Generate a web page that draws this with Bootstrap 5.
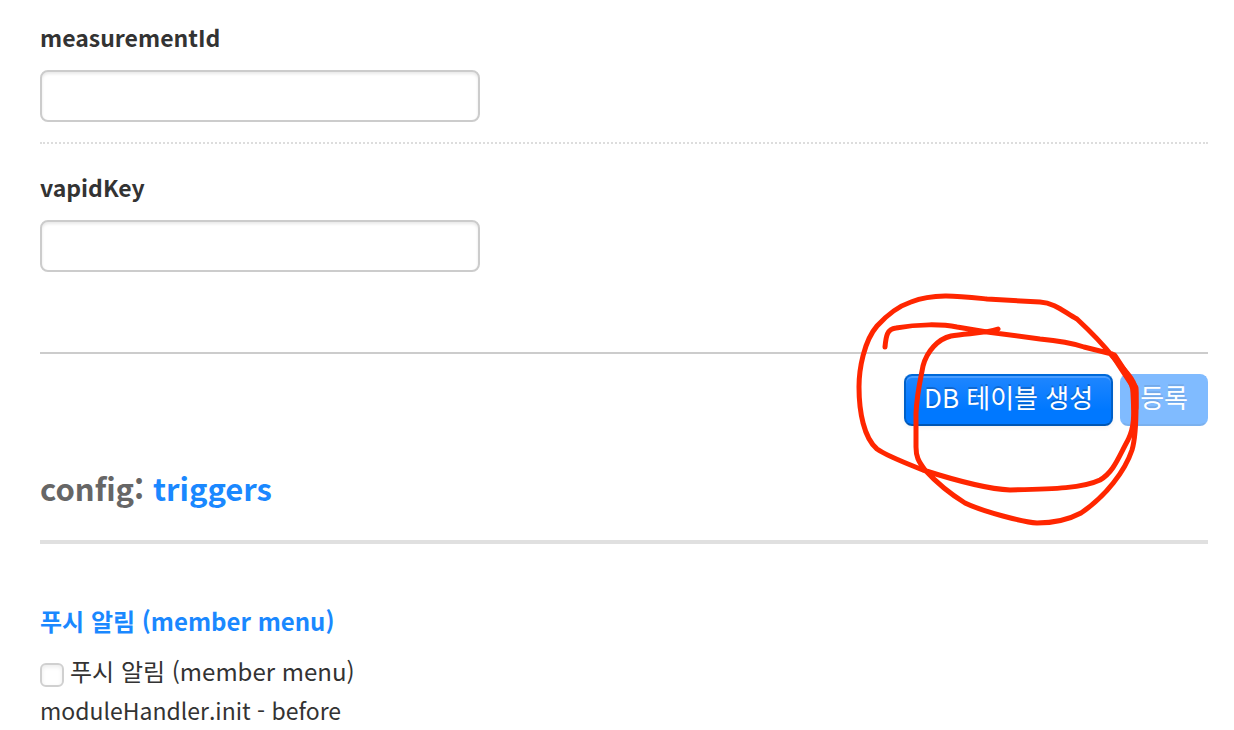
<!DOCTYPE html>
<html lang="ko">
<head>
<meta charset="utf-8">
<meta name="viewport" content="width=device-width, initial-scale=1">
<title>config: triggers</title>
<link href="https://cdn.jsdelivr.net/npm/bootstrap@5.3.0/dist/css/bootstrap.min.css" rel="stylesheet">
<style>
body { font-family: "Noto Sans CJK KR", sans-serif; font-size: 24px; line-height: 38px; color: #333; background: #fff; }
.page { padding: 18px 26px 0 40px; }
.field { padding-bottom: 20px; }
.field + .field { border-top: 2px dotted #ddd; padding-top: 24px; padding-bottom: 80px; }
.field label { font-size: 23px; font-weight: 700; margin-bottom: 14px; }
.field .form-control { max-width: 440px; height: 52px; border: 2px solid #ccc; border-radius: 8px; box-shadow: inset 0 2px 3px rgba(0,0,0,.09); }
.actions { border-top: 2px solid #ccc; padding-top: 20px; gap: 7px; }
.actions .btn { height: 52px; padding: 0 18px; border: 2px solid; border-color: #0069d9 #0060c8 #0056b3; border-radius: 8px; color: #fff; font-size: 26px; line-height: 42px; display: flex; background: linear-gradient(#1f86ff, #0078ff 70%); text-shadow: 0 -2px 0 rgba(0,0,0,.2); box-shadow: inset 0 2px 0 rgba(255,255,255,.2), 0 2px 4px rgba(0,0,0,.05); }
.actions .btn:disabled { opacity: 1; border-color: #80bbff #80bbff #7bb1ee; background: #80bbff; box-shadow: none; text-shadow: 0 -2px 0 rgba(0,0,0,.1); }
.scribble { right: 58px; top: -64px; pointer-events: none; }
.section-title { font-size: 31px; line-height: 44px; font-weight: 700; color: #666; margin: 40px 0 0; padding-bottom: 30px; border-bottom: 4px solid #e0e0e0; }
a, a:hover { color: #1a88ff; text-decoration: none; }
.sub-title { font-size: 24px; line-height: 38px; font-weight: 700; color: #1a88ff; margin: 58px 0 12px; }
.trigger .form-check-input { width: 24px; height: 24px; margin: 8px 0 0; border: 2px solid #d0d0d0; border-radius: 6px; box-shadow: inset 0 2px 4px rgba(0,0,0,.08); }
.trigger { gap: 6px; }
.hook { font-size: 23px; line-height: 40px; }
</style>
</head>
<body>
<main class="page">
  <form>
    <div class="field">
      <label class="d-block" for="measurementId">measurementId</label>
      <input class="form-control" type="text" id="measurementId">
    </div>
    <div class="field">
      <label class="d-block" for="vapidKey">vapidKey</label>
      <input class="form-control" type="text" id="vapidKey">
    </div>
    <div class="actions d-flex justify-content-end position-relative">
      <button type="button" class="btn">DB 테이블 생성</button>
      <button type="submit" class="btn" disabled>등록</button>
      <svg class="scribble position-absolute" width="300" height="240" viewBox="0 0 300 240" fill="none" stroke="#ff2600" stroke-width="5" stroke-linecap="round" stroke-linejoin="round" aria-hidden="true">
        <path d="M35 57C36 46 37 39 46 38C68 34 92 34 107 37L137 42L190 49C212 51 222 53 234 57L262 64C270 74 283 90 283 103C284 123 285 136 278 150C269 166 264 182 250 190C233 198 206 199 160 200C135 199 98 188 73 180C53 172 37 166 27 159C14 148 9 122 9 97C9 79 14 51 27 36C37 25 49 16 61 12C84 3 108 6 137 9L190 12C205 13 214 22 227 29C241 42 252 53 263 67C274 80 286 90 286 103C286 119 287 143 282 160C275 181 256 206 231 223C216 231 200 233 187 233C173 232 134 222 115 213C99 203 85 191 75 180C68 171 66 166 66 157V123C67 103 70 92 73 76C77 61 88 49 101 46C115 43 135 44 148 39"/>
        <path d="M264 66L285 98L285 118" stroke-width="7"/>
      </svg>
    </div>
  </form>
  <h2 class="section-title">config: <a href="#triggers">triggers</a></h2>
  <section id="triggers">
    <h3 class="sub-title">푸시 알림 (member menu)</h3>
    <div class="trigger d-flex align-items-center">
      <input class="form-check-input" type="checkbox" id="push">
      <label for="push">푸시 알림 (member menu)</label>
    </div>
    <div class="hook">moduleHandler.init - before</div>
  </section>
</main>
<script src="https://cdn.jsdelivr.net/npm/bootstrap@5.3.0/dist/js/bootstrap.bundle.min.js"></script>
</body>
</html>
